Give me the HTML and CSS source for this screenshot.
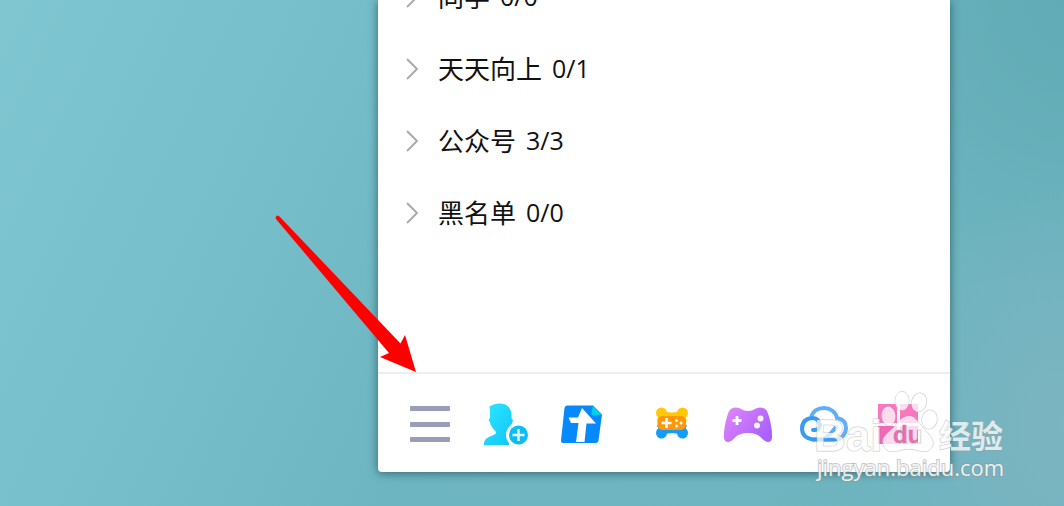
FILE: index.html
```html
<!DOCTYPE html>
<html lang="zh-CN">
<head>
<meta charset="utf-8">
<title>联系人</title>
<link rel="stylesheet" href="styles.css">
</head>
<body class="desktop">
<main class="panel">
  <div class="groups">
    <ul class="group-list">
      <li><button class="group" type="button"><svg class="chevron" viewBox="0 0 14 24"><path d="M2 2 12 12 2 22"/></svg><span class="name">同学</span><span class="count">0/0</span></button></li>
      <li><button class="group" type="button"><svg class="chevron" viewBox="0 0 14 24"><path d="M2 2 12 12 2 22"/></svg><span class="name">天天向上</span><span class="count">0/1</span></button></li>
      <li><button class="group" type="button"><svg class="chevron" viewBox="0 0 14 24"><path d="M2 2 12 12 2 22"/></svg><span class="name">公众号</span><span class="count">3/3</span></button></li>
      <li><button class="group" type="button"><svg class="chevron" viewBox="0 0 14 24"><path d="M2 2 12 12 2 22"/></svg><span class="name">黑名单</span><span class="count">0/0</span></button></li>
    </ul>
  </div>
  <footer class="toolbar">
    <button class="tool" type="button" aria-label="主菜单">
      <svg viewBox="0 0 48 48"><g fill="#989eb8"><rect x="4" y="5" width="40" height="5" rx="1"/><rect x="4" y="21" width="40" height="5" rx="1"/><rect x="4" y="36" width="40" height="5" rx="1"/></g></svg>
    </button>
    <button class="tool" type="button" aria-label="加好友">
      <svg viewBox="0 0 48 48">
        <defs><linearGradient id="person" x1="0" y1="0" x2="1" y2="1"><stop offset="0" stop-color="#2ee8ff"/><stop offset="1" stop-color="#0fc4fb"/></linearGradient></defs>
        <path fill="url(#person)" d="M7.500 5.500C10 4 13 2.500 17.500 2.500C25 2.500 29.500 7.500 29.500 14V17.500L31 19L29.500 24C27 28.500 24 30 24 32.500C25 34 26.500 34.500 28 35L27 44H2C2 39 3.500 37.500 8 35.500C13 33.500 14 33 14 31C11.500 28 8.500 25 8 21.500L6.500 19L8 17V10Z"/>
        <circle cx="36.500" cy="34" r="12.500" fill="#fff"/><circle cx="36.500" cy="34" r="9.500" fill="#0bbdf2"/>
        <path d="M30.500 34h12M36.500 28v12" stroke="#e5fbff" stroke-width="2.500"/>
      </svg>
    </button>
    <button class="tool" type="button" aria-label="腾讯文档">
      <svg viewBox="0 0 48 48">
        <path fill="#0788fb" d="M9 4.500H35L44 13.500 40.500 39.500Q40 42 37.500 42H5Q2.800 42 3 39.500L6.500 7Q7 4.500 9 4.500Z"/>
        <path fill="#00cfe8" d="M35 4.500 44 13.500 36 14.500Q33 14.500 33.300 12Z"/>
        <path fill="#fff" d="M24 7 38 22.500H28.500L26.500 41H18L20.500 22H13L10.500 16.500H20Z"/>
      </svg>
    </button>
    <button class="tool game" type="button" aria-label="游戏中心">
      <svg viewBox="0 0 48 48">
        <g fill="#ffc90a"><circle cx="13.500" cy="12" r="5.500"/><circle cx="34.500" cy="12" r="5.500"/><path d="M13 9.500Q19 11.500 24 11.500T35 9.500L39 20H9Z"/></g>
        <g fill="#129dfa"><circle cx="13.500" cy="32" r="5.500"/><circle cx="34.500" cy="32" r="5.500"/><path d="M9 24H39L35 35Q30 32 24 32T13 35Z"/></g>
        <rect x="9.500" y="15" width="28.500" height="14" rx="5" fill="#ff970b"/>
        <path d="M13.500 22h10M18.500 17v10" stroke="#fff" stroke-width="2.500"/>
        <g fill="#fff"><circle cx="28.500" cy="19.500" r="1.500"/><circle cx="28.500" cy="25" r="1.500"/><circle cx="33" cy="22" r="1.500"/></g>
      </svg>
    </button>
    <button class="tool" type="button" aria-label="游戏">
      <svg viewBox="0 0 48 48">
        <defs><linearGradient id="pad" x1="0" y1="0" x2="1" y2=".6"><stop offset="0" stop-color="#e386fb"/><stop offset="1" stop-color="#aa62fb"/></linearGradient></defs>
        <path fill="url(#pad)" d="M9 7Q12 6 16 7.500Q24 12.500 32 7.500Q36 6 39 7Q43 8 44.500 14Q48.500 27 48 37Q47.500 41 44 41Q41 41 37 36.500Q33 32 24 32Q15 32 11 36.500Q7 41 4 41Q.5 41 0 37Q-.5 27 3.500 14Q5 8 9 7Z"/>
        <path d="M8.500 19.500h9M13 15v9" stroke="#fff" stroke-width="2.800"/>
        <g fill="#fbf4ff"><circle cx="36.500" cy="17.500" r="3"/><circle cx="33" cy="24.500" r="3"/></g>
      </svg>
    </button>
    <button class="tool" type="button" aria-label="微云">
      <svg viewBox="0 0 48 48">
        <g fill="none" stroke-width="4" stroke-linecap="round"><path stroke="#62adf8" d="M11.500 15.500C13 10 18 7 24 7S36 11 37 17C43 18 46 22 46 27S42 38.500 35 38.500H13"/><path stroke="#379af5" d="M13 29Q20 29.500 20 24Q19 17 12 17Q2 18 2 28Q2.500 37 13 38.500H35"/><path stroke="#62adf8" d="M26 36C32 33 33 29 36 26"/></g>
      </svg>
    </button>
    <button class="tool" type="button" aria-label="应用管理">
      <svg viewBox="0 0 48 48"><g fill="#fa76bf"><rect x="2" y="3" width="19" height="19"/><rect x="24" y="3" width="18" height="19"/></g><g fill="#f467b6"><rect x="2" y="25" width="19" height="18"/><rect x="24" y="25" width="18" height="18"/></g></svg>
    </button>
  </footer>
  <svg class="arrow" viewBox="274 214 144 160" aria-hidden="true"><path fill="#f00" d="M279.500 216.500 400.500 343.500 405 335 416 372 380 357 389 353 276 219Q275 216 277.500 215.500Z"/></svg>
</main>
<svg class="watermark" viewBox="812 388 200 100" role="img" aria-label="Baidu 经验">
  <defs><linearGradient id="du" gradientUnits="userSpaceOnUse" x1="893" y1="0" x2="924" y2="0"><stop offset=".8" stop-color="#ef68b4"/><stop offset=".8" stop-color="#fff"/></linearGradient></defs>
  <g class="mark">
    <text class="brand" x="814" y="451">Bai</text>
    <ellipse cx="888.500" cy="416" rx="7" ry="9.500" transform="rotate(-5 888.500 416)"/>
    <ellipse cx="902" cy="401" rx="7" ry="9.500"/>
    <ellipse cx="919" cy="402.500" rx="7.500" ry="9.500" transform="rotate(15 919 402.500)"/>
    <ellipse cx="929.500" cy="419.500" rx="7.500" ry="9.500" transform="rotate(10 929.500 419.500)"/>
    <path d="M909 416C916 416 919 424 926 431C932 437 935 442 932 447C929 453 922 452 916 450Q909 448 901 450C892 453 885 452 883 444C881 437 888 433 894 427C899 421 902 416 909 416Z"/>
    <text class="topic" x="939" y="448">经验</text>
    <text class="site" x="817" y="476">jingyan.baidu.com</text>
  </g>
  <text class="du" x="893" y="443" fill="url(#du)">du</text>
</svg>
</body>
</html>
```
FILE: styles.css
```css
* { box-sizing: border-box; }

.desktop {
  margin: 0;
  min-height: 100vh;
  display: grid;
  grid-template-columns: 378fr 572fr 114fr;
  padding-bottom: 34px;
  position: relative;
  overflow: hidden;
  font-family: "Open Sans", "Noto Sans CJK SC", sans-serif;
  background:
    radial-gradient(ellipse 18% 50% at 100% 85%, #7cb4c1, transparent),
    radial-gradient(ellipse 24% 60% at 100% 0, #60abb5, transparent),
    linear-gradient(115deg, #7fc6d1 0, #76bfcb 24%, #6db5c1 48%, #6eb4bf 100%);
}

.panel {
  grid-column: 2;
  position: relative;
  display: flex;
  flex-direction: column;
  background: #fff;
  border-radius: 0 0 4px 4px;
  box-shadow: 0 1px 10px rgba(20, 65, 75, .7);
}

.groups { flex: 1; overflow: hidden; }

.group-list { list-style: none; margin: -39px 0 0; padding: 0; }

.group {
  display: flex;
  align-items: center;
  width: 100%;
  height: 72px;
  padding: 0 27px;
  border: 0;
  background: none;
  color: #111;
  font: 26px "Noto Sans CJK SC", sans-serif;
}

.chevron {
  width: 14px;
  height: 24px;
  margin-right: 19px;
  fill: none;
  stroke: #aaa;
  stroke-width: 2;
}

.name { padding-bottom: 4px; }

.count {
  margin-left: 10px;
  padding-bottom: 2px;
  font: 25px "Open Sans", sans-serif;
}

.toolbar {
  display: flex;
  gap: 28px;
  height: 100px;
  padding: 27px 22px 0 28px;
  border-top: 2px solid #eee;
}

.tool {
  flex: none;
  width: 48px;
  height: 48px;
  padding: 0;
  border: 0;
  background: none;
}

.tool svg { display: block; width: 48px; height: 48px; overflow: visible; }

.game { margin-left: 14px; }

.arrow {
  position: absolute;
  left: -104px;
  bottom: 98px;
  width: 144px;
  height: 160px;
}

.watermark {
  position: absolute;
  right: 52px;
  bottom: 18px;
  width: 200px;
  height: 100px;
  overflow: visible;
  pointer-events: none;
}

.mark {
  fill: rgba(255, 255, 255, .75);
  stroke: rgba(150, 150, 150, .5);
  stroke-width: 1;
  paint-order: stroke;
}

.brand { font: bold 44px "Liberation Sans", sans-serif; }
.topic { font: bold 32px "Noto Sans CJK SC", sans-serif; }
.site { font: 22px "Open Sans", sans-serif; stroke-width: 2; fill: rgba(255, 255, 255, .85); }

.du {
  font: bold 24px "Liberation Sans", sans-serif;
  stroke: rgba(150, 150, 150, .4);
  stroke-width: 1;
}
```
